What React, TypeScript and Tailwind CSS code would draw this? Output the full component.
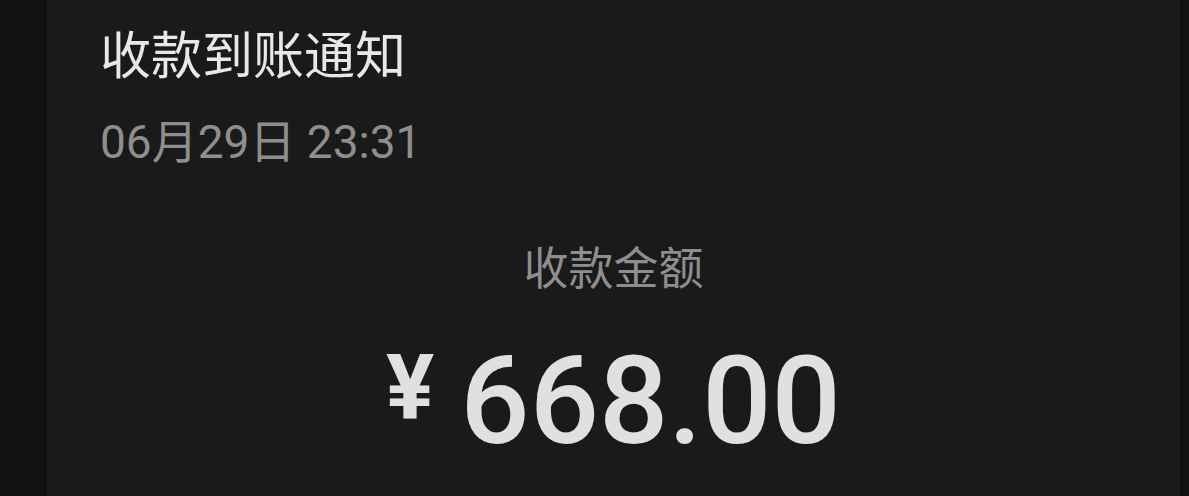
import React from 'react';

export default function App() {
  return (
    <div className="w-[1189px] h-[496px] bg-[#121212] overflow-hidden flex" style={{ fontFamily: '"Noto Sans CJK SC", "Noto Sans", sans-serif' }}>
      {/* Notification card */}
      <div className="ml-[47px] w-[1133px] h-full bg-[#1a1a1a] flex flex-col shadow-[0_0_6px_rgba(0,0,0,0.4)]">
        <div className="pl-[53px] pt-[18px]">
          <h1 className="text-[51px] leading-[68px] text-[#e8e8e8] font-normal">收款到账通知</h1>
          <p className="mt-[28px] text-[46px] leading-[56px] text-[#8e8e8e]" style={{ fontFamily: 'Roboto, "Noto Sans CJK SC", sans-serif' }}>
            06月29日 23:31
          </p>
        </div>

        {/* Amount */}
        <div className="flex flex-col items-center mt-[66px]">
          <p className="text-[45px] leading-[60px] text-[#8e8e8e]">收款金额</p>
          <div className="flex items-start mt-[48px]" style={{ fontFamily: 'Roboto, "Noto Sans", sans-serif' }}>
            <span className="text-[90px] leading-[90px] font-bold text-[#e0e0e0] mr-[26px]">¥</span>
            <span className="text-[122px] leading-[116px] font-medium text-[#e0e0e0]">668.00</span>
          </div>
        </div>
      </div>
    </div>
  );
}
